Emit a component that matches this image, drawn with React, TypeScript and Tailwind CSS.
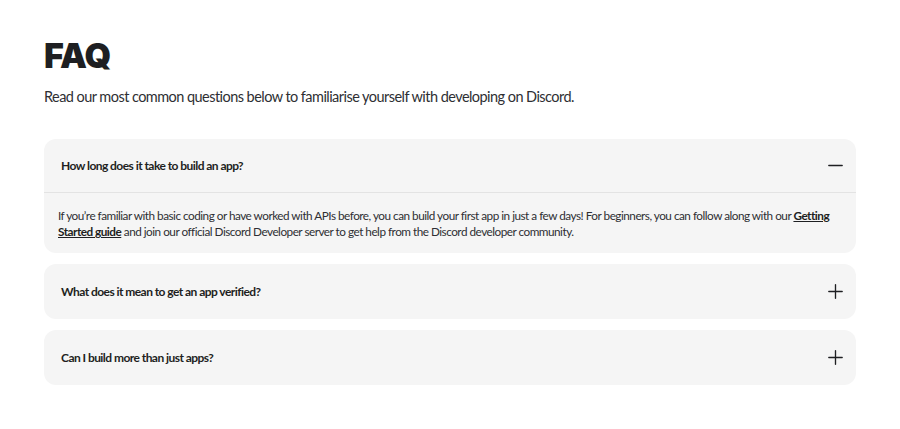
import { Minus, Plus } from 'lucide-react';

interface FaqItem {
  q: string;
  open?: boolean;
}

const ITEMS: FaqItem[] = [
  { q: 'How long does it take to build an app?', open: true },
  { q: 'What does it mean to get an app verified?' },
  { q: 'Can I build more than just apps?' },
];

export default function App() {
  return (
    <div className="min-h-[429px] bg-white px-[44px] pt-[35px] text-[#1e1f22]" style={{ fontFamily: 'Lato, sans-serif' }}>
      {/* Header */}
      <h1 className="text-[34px] leading-[42px] font-black tracking-tight" style={{ fontFamily: 'Inter, sans-serif' }}>
        FAQ
      </h1>
      <p className="mt-[9px] text-[14.5px] leading-[22px] tracking-[-0.55px] text-[#2e2f33]">
        Read our most common questions below to familiarise yourself with developing on Discord.
      </p>

      {/* Accordion */}
      <div className="mt-[31px] flex w-[812px] flex-col gap-[11px]">
        {ITEMS.map((item) => (
          <div key={item.q} className="rounded-[12px] bg-[#f5f5f5]">
            <div
              className={`flex items-center justify-between pl-[17px] pr-[9px] ${
                item.open ? 'h-[54px] border-b border-[#e3e3e3]' : 'h-[55px]'
              }`}
            >
              <span className="text-[12px] font-bold tracking-[-0.55px]">{item.q}</span>
              {item.open ? (
                <Minus className="h-[23px] w-[23px] text-[#1e1f22]" strokeWidth={1.4} />
              ) : (
                <Plus className="h-[23px] w-[23px] text-[#1e1f22]" strokeWidth={1.4} />
              )}
            </div>
            {item.open && (
              <div className="px-[14px] pb-[13px] pt-[15px] text-[11.75px] leading-[16px] tracking-[-0.5px] text-[#2e2f33]">
                If you’re familiar with basic coding or have worked with APIs before, you can build your first app in just a few days! For
                beginners, you can follow along with our{' '}
                <a href="#" className="font-bold text-[#1e1f22] underline">
                  Getting Started guide
                </a>{' '}
                and join our official Discord Developer server to get help from the Discord developer community.
              </div>
            )}
          </div>
        ))}
      </div>
    </div>
  );
}
